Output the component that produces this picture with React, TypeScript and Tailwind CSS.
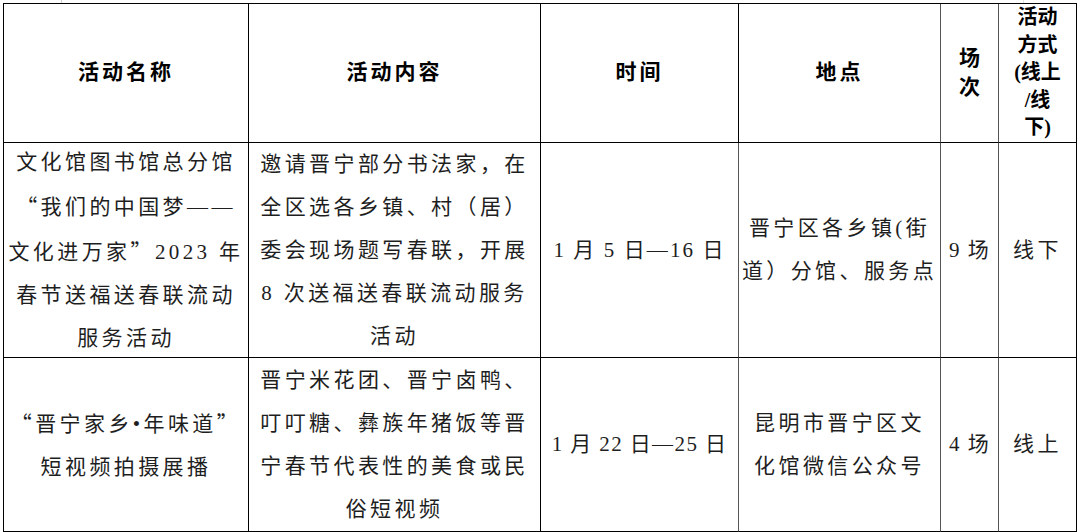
const font = "font-['Liberation_Serif','Noto_Sans_CJK_SC',serif]";

const Line = ({ children }: { children: React.ReactNode }) => <div className="whitespace-nowrap">{children}</div>;
const Q = ({ children }: { children: React.ReactNode }) => (
  <span className="font-['Noto_Sans_CJK_SC',sans-serif]">{children}</span>
);

export default function App() {
  const head = "flex flex-col items-center justify-center border-b border-r border-black font-bold text-black";
  const cell = "flex flex-col items-center justify-center border-b border-r text-center text-[21px] leading-[43px] text-[#1e1e1e]";
  const wide = "tracking-[3.4px]";

  return (
    <div className={`h-[532px] w-[1080px] bg-white ${font}`}>
      <div className="flex h-[3px]">
        <div className="ml-[61px] w-px bg-[#d4d4d4]" />
        <div className="ml-[961px] w-px bg-[#e4e4e4]" />
      </div>
      <div className="ml-[3px] grid w-[1074px] grid-cols-[246px_292px_198px_202px_58px_78px] grid-rows-[139px_215px_174px] border-t border-black">
        {/* header */}
        <div className={`${head} border-l text-[21px] tracking-[3px]`}>活动名称</div>
        <div className={`${head} text-[21px] tracking-[3px]`}>活动内容</div>
        <div className={`${head} text-[21px] tracking-[3px]`}>时间</div>
        <div className={`${head} border-r-[#555] text-[21px] tracking-[3px]`}>地点</div>
        <div className={`${head} border-r-[#555] text-[21px] leading-[29px]`}>
          <Line>场</Line>
          <Line>次</Line>
        </div>
        <div className={`${head} text-[20px] leading-[27.5px]`}>
          <Line>活动</Line>
          <Line>方式</Line>
          <Line>(线上</Line>
          <Line>/线</Line>
          <Line>下)</Line>
        </div>

        {/* row 1 */}
        <div className={`${cell} ${wide} border-l border-black`}>
          <Line>文化馆图书馆总分馆</Line>
          <Line><Q>“</Q>我们的中国梦——</Line>
          <Line>文化进万家<Q>”</Q>2023 年</Line>
          <Line>春节送福送春联流动</Line>
          <Line>服务活动</Line>
        </div>
        <div className={`${cell} ${wide} border-black`}>
          <Line>邀请晋宁部分书法家，在</Line>
          <Line>全区选各乡镇、村（居）</Line>
          <Line>委会现场题写春联，开展</Line>
          <Line>8 次送福送春联流动服务</Line>
          <Line>活动</Line>
        </div>
        <div className={`${cell} border-b-black border-r-[#555] tracking-[2.1px]`}>
          <Line>1 月 5 日—16 日</Line>
        </div>
        <div className={`${cell} ${wide} border-b-black border-r-[#555]`}>
          <Line>晋宁区各乡镇(街</Line>
          <Line>道）分馆、服务点</Line>
        </div>
        <div className={`${cell} border-b-black border-r-[#555] tracking-[1.5px]`}>
          <Line>9 场</Line>
        </div>
        <div className={`${cell} ${wide} border-black`}>
          <Line>线下</Line>
        </div>

        {/* row 2 */}
        <div className={`${cell} ${wide} border-l border-black`}>
          <Line><Q>“</Q>晋宁家乡•年味道<Q>”</Q></Line>
          <Line>短视频拍摄展播</Line>
        </div>
        <div className={`${cell} ${wide} border-black`}>
          <Line>晋宁米花团、晋宁卤鸭、</Line>
          <Line>叮叮糖、彝族年猪饭等晋</Line>
          <Line>宁春节代表性的美食或民</Line>
          <Line>俗短视频</Line>
        </div>
        <div className={`${cell} border-b-black border-r-[#555] tracking-[1.4px]`}>
          <Line>1 月 22 日—25 日</Line>
        </div>
        <div className={`${cell} ${wide} border-b-black border-r-[#555]`}>
          <Line>昆明市晋宁区文</Line>
          <Line>化馆微信公众号</Line>
        </div>
        <div className={`${cell} border-b-black border-r-[#555] tracking-[1.5px]`}>
          <Line>4 场</Line>
        </div>
        <div className={`${cell} ${wide} border-black`}>
          <Line>线上</Line>
        </div>
      </div>
    </div>
  );
}
